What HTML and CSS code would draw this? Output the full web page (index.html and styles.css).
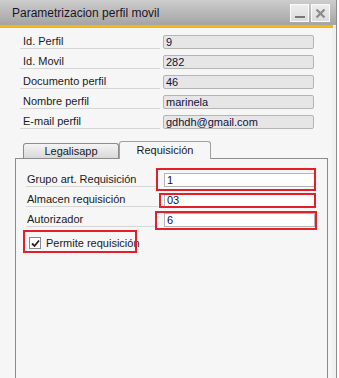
FILE: index.html
```html
<!DOCTYPE html>
<html lang="es">
  <head>
    <meta charset="UTF-8" />
    <title>Parametrizacion perfil movil</title>
    <link rel="stylesheet" href="styles.css">
  </head>
  <body>
    <div class="window">
      <div class="title-bar">
        <span class="title">Parametrizacion perfil movil</span>
        <div class="title-buttons">
          <span class="tb-btn tb-min"><span class="min-bar"></span></span>
          <span class="tb-btn tb-close">
            <svg width="11" height="11" viewBox="0 0 11 11">
              <path d="M1.5 1.5 L9.5 9.5 M9.5 1.5 L1.5 9.5" stroke="#8a8a8a" stroke-width="2.2" />
            </svg>
          </span>
        </div>
      </div>
      <div class="stripe"></div>

      <div class="content">
        <div class="header-fields">
          <div class="row">
            <label class="field-label">Id. Perfil</label>
            <span class="field ro">9</span>
          </div>
          <div class="row">
            <label class="field-label">Id. Movil</label>
            <span class="field ro">282</span>
          </div>
          <div class="row">
            <label class="field-label">Documento perfil</label>
            <span class="field ro">46</span>
          </div>
          <div class="row">
            <label class="field-label">Nombre perfil</label>
            <span class="field ro">marinela</span>
          </div>
          <div class="row">
            <label class="field-label">E-mail perfil</label>
            <span class="field ro">gdhdh@gmail.com</span>
          </div>
        </div>

        <div class="tabs">
          <span class="tab">Legalisapp</span>
          <span class="tab active">Requisición</span>
        </div>

        <div class="panel">
          <div class="row">
            <label class="field-label">Grupo art. Requisición</label>
            <span class="field">1</span>
          </div>
          <div class="row">
            <label class="field-label">Almacen requisición</label>
            <span class="field">03</span>
          </div>
          <div class="row">
            <label class="field-label">Autorizador</label>
            <span class="field">6</span>
          </div>
          <div class="check-row">
            <span class="checkbox">
              <svg width="9" height="9" viewBox="0 0 9 9">
                <path d="M1 4.5 L3.5 7 L8 1.5" fill="none" stroke="#222" stroke-width="1.8" />
              </svg>
            </span>
            <span class="check-label">Permite requisición</span>
          </div>
        </div>
      </div>

      <!-- highlight marks drawn over the screenshot -->
      <div class="mark mark-grupo"></div>
      <div class="mark mark-almacen"></div>
      <div class="mark mark-autorizador"></div>
      <div class="mark mark-permite"></div>
    </div>
  </body>
</html>
```

FILE: styles.css
```css
body {
  margin: 0;
  background-color: #ffffff;
  font-family: "Liberation Sans", Arial, sans-serif;
  font-size: 11px;
  color: #1a1a1a;
  overflow: hidden;
}

.window {
  position: relative;
  width: 336px;
  height: 378px;
  border-right: 1px solid #8c8c8c;
  background-color: #f0f0f0;
}

.title-bar {
  height: 25px;
  display: flex;
  align-items: center;
  justify-content: space-between;
  padding: 0 6px 0 12px;
  background: linear-gradient(#cdcdcd, #a4a4a4);
}

.title {
  font-size: 12px;
  color: #1c1424;
  padding-top: 1px;
}

.title-buttons {
  display: flex;
  gap: 2px;
  padding-top: 1px;
}

.tb-btn {
  width: 17px;
  height: 16px;
  display: flex;
  align-items: center;
  justify-content: center;
  border: 1px solid #fafafa;
  background: linear-gradient(#ececec, #dcdcdc);
}

.tb-min {
  align-items: flex-end;
}

.min-bar {
  width: 10px;
  height: 2px;
  margin-bottom: 3px;
  background-color: #777777;
}

.stripe {
  height: 3px;
  margin-right: 3px;
  background-color: #f7b512;
}

.content {
  margin-right: 4px;
  padding: 7px 0 0 4px;
  background-color: #f6f6f6;
  height: 343px;
}

.header-fields {
  padding-left: 16px;
}

.row {
  display: flex;
  align-items: flex-start;
  height: 20px;
}

.field-label {
  width: 137px;
  height: 13px;
  line-height: 13px;
  padding-left: 3px;
  border-bottom: 1px solid #d6d6d6;
}

.field {
  margin-left: 3px;
  width: 145px;
  height: 12px;
  line-height: 12px;
  padding: 0 2px;
  border: 1px solid #b4b4b4;
  background-color: #ffffff;
  color: #10103a;
}

.field.ro {
  background-color: #e6e6e6;
  border-radius: 2px;
}

.tabs {
  display: flex;
  align-items: flex-end;
  height: 18px;
  margin-top: 5px;
  padding-left: 19px;
}

.tab {
  width: 94px;
  height: 14px;
  line-height: 14px;
  text-align: center;
  border: 1px solid #8c8c8c;
  border-bottom: none;
  border-radius: 3px 3px 0 0;
  background: linear-gradient(#f4f4f4, #d9d9d9);
}

.tab.active {
  width: 90px;
  height: 17px;
  line-height: 17px;
  margin-bottom: -1px;
  position: relative;
  background: #f6f6f6;
  border-color: #a0a0a0;
}

.panel {
  margin-left: 11px;
  width: 301px;
  height: 220px;
  padding: 14px 0 0 10px;
  border: 1px solid #8c8c8c;
  background-color: #f6f6f6;
}

.panel .field-label {
  width: 131px;
  padding-left: 1px;
}

.panel .field {
  margin-left: 6px;
}

.check-row {
  display: flex;
  align-items: center;
  gap: 5px;
  margin-top: 4px;
  padding-left: 3px;
}

.checkbox {
  width: 10px;
  height: 10px;
  display: flex;
  align-items: center;
  justify-content: center;
  border: 1px solid #8a8a8a;
  background-color: #ffffff;
}

.mark {
  position: absolute;
  border: 2px solid #e3202a;
}

.mark-grupo {
  left: 156px;
  top: 168px;
  width: 156px;
  height: 19px;
}

.mark-almacen {
  left: 159px;
  top: 193px;
  width: 153px;
  height: 11px;
}

.mark-autorizador {
  left: 155px;
  top: 211px;
  width: 158px;
  height: 15px;
}

.mark-permite {
  left: 23px;
  top: 230px;
  width: 110px;
  height: 19px;
}
```
